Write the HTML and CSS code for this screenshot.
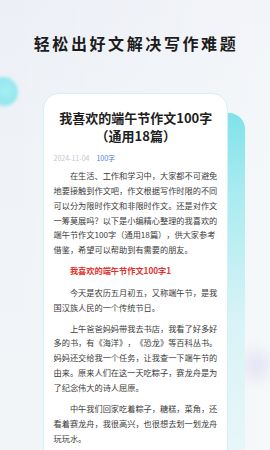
FILE: index.html
```html
<!DOCTYPE html>
<html lang="zh-CN">
<head>
<meta charset="utf-8">
<link rel="stylesheet" href="styles.css">
</head>
<body>
<div class="page">
  <div class="blob blob-left"></div>
  <div class="blob blob-right"></div>
  <h1 class="headline">轻松出好文解决写作难题</h1>
  <div class="stage">
    <div class="back-card"></div>
    <article class="card">
      <h2 class="card-title">我喜欢的端午节作文100字<br>（通用18篇）</h2>
      <div class="meta"><span class="date">2024-11-04</span><span class="tag">100字</span></div>
      <div class="content">
        <p>在生活、工作和学习中，大家都不可避免地要接触到作文吧，作文根据写作时限的不同可以分为限时作文和非限时作文。还是对作文一筹莫展吗？以下是小编精心整理的我喜欢的端午节作文100字（通用18篇），供大家参考借鉴，希望可以帮助到有需要的朋友。</p>
        <p class="sub">我喜欢的端午节作文100字1</p>
        <p>今天是农历五月初五，又称端午节，是我国汉族人民的一个传统节日。</p>
        <p>上午爸爸妈妈带我去书店，我看了好多好多的书，有《海洋》，《恐龙》等百科丛书。妈妈还交给我一个任务，让我查一下端午节的由来。原来人们在这一天吃粽子，赛龙舟是为了纪念伟大的诗人屈原。</p>
        <p>中午我们回家吃着粽子，糖糕，菜角，还看着赛龙舟，我很高兴，也很想去划一划龙舟玩玩水。</p>
      </div>
    </article>
  </div>
</div>
</body>
</html>
```
FILE: styles.css
```css
* { box-sizing: border-box; }
html, body { margin: 0; padding: 0; }
body {
  width: 270px;
  height: 450px;
  overflow: hidden;
  font-family: "Noto Sans CJK SC", "Noto Sans", sans-serif;
  text-spacing-trim: space-all;
}
.page {
  position: relative;
  width: 270px;
  height: 450px;
  overflow: hidden;
  background:
    linear-gradient(90deg, rgba(255,255,255,0) 0%, rgba(255,255,255,0.35) 100%),
    linear-gradient(180deg, #eceff6 0%, #eff3f7 35%, #f1f5f8 100%);
}
.blob { position: absolute; border-radius: 50%; }
.blob-left {
  left: -12px; top: 77px; width: 30px; height: 30px;
  background: radial-gradient(circle at 60% 45%, #a6eef4 0%, #92e6ef 55%, rgba(146,230,239,0) 75%);
  filter: blur(1.5px);
}
.blob-right {
  left: 236px; top: 340px; width: 40px; height: 50px;
  background: radial-gradient(circle, #e4e1f3 0%, rgba(228,225,243,0) 70%);
  filter: blur(3px);
}
.headline {
  position: relative;
  margin: 33px 0 0;
  text-align: center;
  font-size: 16px;
  line-height: 20px;
  letter-spacing: 2.6px;
  font-weight: 700;
  color: #1c1c1c;
  padding-left: 2px;
}
.stage {
  position: relative;
  margin: 40px 0 0 43px;
  width: 185px;
}
.back-card {
  position: absolute;
  top: 20px; left: 16px; right: -17px; height: 380px;
  border-radius: 16px;
  background: linear-gradient(180deg, #80e2ea 0%, #a7ebf0 20%, #d9f3f6 55%, #edf7f9 100%);
}
.card {
  position: relative;
  background: #ffffff;
  border: 1.5px solid #d3f2f5;
  border-radius: 16px 16px 0 0;
  padding: 15px 9px 20px 9.5px;
  height: 380px;
}
.card-title {
  margin: 0;
  text-align: center;
  font-size: 13px;
  line-height: 18px;
  font-weight: 700;
  color: #1e1e1e;
}
.meta {
  margin-top: 7px;
  display: flex;
  gap: 7px;
  font-size: 7px;
  line-height: 12px;
}
.date { color: #c3c6cc; }
.tag { color: #4c7fcf; }
.content {
  margin-top: 4px;
  width: 165px;
  font-size: 8.2px;
  line-height: 14.85px;
  color: #3b3b3b;
}
.content p {
  margin: 0 0 6px;
  text-indent: 2em;
}
.content .sub {
  color: #e2312c;
  font-weight: 700;
  margin-bottom: 7px;
}
```
